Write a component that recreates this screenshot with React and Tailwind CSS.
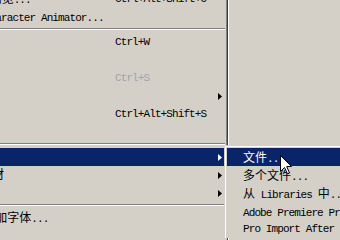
import React from 'react';

const cjk = /([\u3000-\u9fff\uff00-\uffef]+)/;

// split mixed text so CJK runs get their own font
function Txt({ s }) {
  return s
    .split(cjk)
    .filter(Boolean)
    .map((p, i) =>
      cjk.test(p) ? (
        <span key={i} className="font-['Noto_Sans_CJK_SC',sans-serif] text-[12px] tracking-normal">
          {p}
        </span>
      ) : (
        <span key={i}>{p}</span>
      )
    );
}

const mainItems = [
  { label: '在 Bridge 中浏览...', key: 'Ctrl+Alt+Shift+O' },
  { label: '打开 Adobe Character Animator...' },
  { sep: true },
  { label: '关闭', key: 'Ctrl+W' },
  { label: '关闭项目' },
  { label: '保存', key: 'Ctrl+S', disabled: true },
  { label: '另存为', arrow: true },
  { label: '增量保存', key: 'Ctrl+Alt+Shift+S' },
  { label: '恢复' },
  { sep: true },
  { label: '导入', arrow: true, active: true },
  { label: '导入最近的素材', arrow: true },
  { label: '导出', arrow: true },
  { sep: true },
  { label: '从 Typekit 添加字体...' },
  { label: '整理工程' },
];

const subItems = [
  { label: '文件...', active: true },
  { label: '多个文件...' },
  { label: '从 Libraries 中...' },
  { label: 'Adobe Premiere Pro 项目...' },
  { label: 'Pro Import After Effects...' },
];

function Arrow({ white }) {
  return (
    <svg width="4" height="7" viewBox="0 0 4 7" className="shrink-0">
      <polygon points="0,0 4,3.5 0,7" fill={white ? '#ffffff' : '#000000'} />
    </svg>
  );
}

function Separator() {
  return (
    <div className="h-[7px] pt-[2px]">
      <div className="h-px bg-[#808080]" />
      <div className="h-px bg-white" />
    </div>
  );
}

function MainRow({ item }) {
  const color = item.active ? 'bg-[#0a246a] text-white' : item.disabled ? 'text-[#a4a4a4]' : 'text-black';
  return (
    <div className={`h-[18px] flex items-center whitespace-nowrap leading-[18px] ${color}`}>
      <div className="w-[115px] shrink-0 overflow-visible">
        <div className="ml-[-80px]">
          <Txt s={item.label} />
        </div>
      </div>
      <div className="flex-1">{item.key}</div>
      {item.arrow && (
        <div className="mr-[3px]">
          <Arrow white={item.active} />
        </div>
      )}
    </div>
  );
}

function Cursor() {
  return (
    <svg width="13" height="20" viewBox="0 0 13 20" className="absolute left-[280px] top-[155px]">
      <polygon
        points="0.5,0.5 0.5,16.5 4.5,12.5 7.5,19 9.5,18 6.7,11.5 11.5,11.5"
        fill="#ffffff"
        stroke="#000000"
        strokeWidth="1"
        strokeLinejoin="miter"
      />
    </svg>
  );
}

export default function App() {
  return (
    <div className="w-[340px] h-[240px] relative overflow-hidden bg-[#d4d0c8] flex font-['Liberation_Mono',monospace] text-[11px] tracking-[-0.9px]">
      {/* main file menu, clipped on the left */}
      <div className="w-[228px] shrink-0 border-r border-[#404040]">
        <div className="h-full border-r border-[#808080] pr-px">
          <div className="mt-[-10px] flex flex-col">
            {mainItems.map((it, i) => (it.sep ? <Separator key={i} /> : <MainRow key={i} item={it} />))}
          </div>
        </div>
      </div>
      <div className="flex-1 border-l border-white" />

      {/* import submenu */}
      <div className="absolute left-[224px] top-[145px] w-[140px] border-l border-t border-[#d4d0c8] bg-[#d4d0c8]">
        <div className="border-l border-t border-white pl-px pt-px">
          {subItems.map((it, i) => (
            <div
              key={i}
              className={`h-[18px] leading-[18px] pl-[16px] whitespace-nowrap ${it.active ? 'bg-[#0a246a] text-white' : 'text-black'}`}
            >
              <Txt s={it.label} />
            </div>
          ))}
        </div>
      </div>

      <Cursor />
    </div>
  );
}
